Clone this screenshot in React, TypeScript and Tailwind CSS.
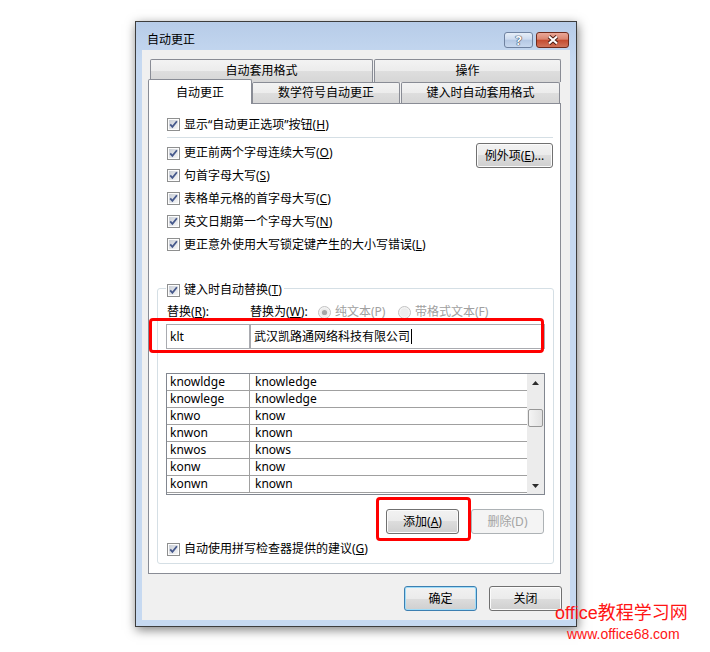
const btn =
  "flex items-center justify-center rounded-[3px] border border-[#707070] bg-[linear-gradient(#f2f2f2_0%,#ebebeb_50%,#dddddd_50%,#cfcfcf_100%)] shadow-[inset_0_0_0_1px_#fbfbfb]";
const tab =
  "flex items-center justify-center rounded-t-[2px] border-x border-t border-[#898c95] bg-[linear-gradient(#f3f3f3_0%,#ececec_50%,#dedede_50%,#d6d6d6_100%)]";

const Check = () => (
  <svg width="13" height="13" viewBox="0 0 13 13" className="shrink-0">
    <defs>
      <linearGradient id="cbfill" x1="0" y1="0" x2="1" y2="1">
        <stop offset="0" stopColor="#c9ced6" />
        <stop offset="1" stopColor="#f7f7f7" />
      </linearGradient>
    </defs>
    <rect x="0.5" y="0.5" width="12" height="12" fill="#fdfdfd" stroke="#8e8f8f" />
    <rect x="2" y="2" width="9" height="9" fill="url(#cbfill)" />
    <path d="M3.2 6.3 L5.4 8.9 L9.9 3.2" fill="none" stroke="#46598c" strokeWidth="1.8" />
  </svg>
);

const Radio = ({ on }: { on?: boolean }) => (
  <svg width="13" height="13" viewBox="0 0 13 13" className="shrink-0">
    <circle cx="6.5" cy="6.5" r="6" fill="#f4f4f4" stroke="#c2c2c2" />
    <circle cx="6.5" cy="6.5" r="4.3" fill="#ececec" />
    {on && <circle cx="6.5" cy="6.5" r="2.6" fill="#a6a6a6" />}
  </svg>
);

const CheckRow = ({ children, h }: { children: React.ReactNode; h: string }) => (
  <div className={`flex items-center gap-[4px] pl-[10px] ${h}`}>
    <Check />
    <span className="leading-none">{children}</span>
  </div>
);

const words: [string, string][] = [
  ["knowldge", "knowledge"],
  ["knowlege", "knowledge"],
  ["knwo", "know"],
  ["knwon", "known"],
  ["knwos", "knows"],
  ["konw", "know"],
  ["konwn", "known"],
];

const Arrow = ({ down }: { down?: boolean }) => (
  <svg width="7" height="4" viewBox="0 0 7 4">
    <path d={down ? "M0 0 L7 0 L3.5 4Z" : "M0 4 L3.5 0 L7 4Z"} fill="#2c2c2c" />
  </svg>
);

export default function App() {
  return (
    <div className="relative h-[652px] w-[710px] overflow-hidden bg-white pl-[135px] pt-[21px] font-['Noto_Sans','Noto_Sans_CJK_SC',sans-serif] text-[12px] text-black">
      <div className="flex h-[606px] w-[442px] flex-col border border-[#3d3d3d] bg-[linear-gradient(#b7cce8,#c6d9f1_40px,#c6d9f1)] px-[6px] pb-[6px] shadow-[1px_3px_10px_rgba(0,0,0,0.5)]">
        {/* title bar */}
        <div className="flex h-[28px] items-start pt-[10px]">
          <div className="flex-1 pl-[5px] leading-[16px]">自动更正</div>
          <div className="flex h-[16px] w-[29px] items-center justify-center rounded-[3px] border border-[#6f82a0] bg-[linear-gradient(#e6eef8,#cddbef_45%,#b4c8e4_50%,#c8d8ee)]">
            <span className="text-[13px] font-bold leading-none text-white [text-shadow:0_0_1px_#2d3a52,0_0_1px_#2d3a52,0_0_1px_#2d3a52]">?</span>
          </div>
          <div className="ml-[3px] mr-[1px] flex h-[16px] w-[33px] items-center justify-center rounded-[3px] border border-[#6e2a1c] bg-[linear-gradient(#eaa898,#da8570_45%,#c44a2e_50%,#d0735a)]">
            <svg width="12" height="10" viewBox="0 0 12 10">
              <path d="M2 1.5 L10 8.5 M10 1.5 L2 8.5" stroke="#4a1a12" strokeWidth="4" />
              <path d="M2 1.5 L10 8.5 M10 1.5 L2 8.5" stroke="#ffffff" strokeWidth="2.2" />
            </svg>
          </div>
        </div>

        {/* client */}
        <div className="flex flex-1 flex-col bg-[#f0f0f0] pt-[9px]">
          {/* tabs row 1 */}
          <div className="ml-[8px] flex h-[23px]">
            <div className={`${tab} w-[223px] pb-[1px]`}>自动套用格式</div>
            <div className={`${tab} ml-[1px] w-[187px] pb-[1px]`}>操作</div>
          </div>
          {/* tabs row 2 */}
          <div className="ml-[6px] flex h-[21px] items-end">
            <div className="relative z-10 -mb-px flex h-[25px] w-[104px] items-center justify-center rounded-t-[2px] border-x border-t border-[#898c95] bg-white pt-[1px]">
              自动更正
            </div>
            <div className={`${tab} h-[21px] w-[148px]`}>数学符号自动更正</div>
            <div className={`${tab} ml-[1px] h-[21px] w-[159px]`}>键入时自动套用格式</div>
          </div>

          {/* panel */}
          <div className="ml-[6px] flex h-[471px] w-[413px] flex-col border border-[#898c95] bg-white px-[8px] pt-[9px]">
            <CheckRow h="h-[23px]">
              显示“自动更正选项”按钮(<u>H</u>)
            </CheckRow>
            <div className="ml-[10px] mt-[1px] h-px w-[386px] bg-[#d5dfe5]" />

            <div className="mt-[4px] flex justify-between">
              <div className="flex flex-col">
                <CheckRow h="h-[22px]">
                  更正前两个字母连续大写(<u>O</u>)
                </CheckRow>
                <CheckRow h="h-[23px]">
                  句首字母大写(<u>S</u>)
                </CheckRow>
                <CheckRow h="h-[23px]">
                  表格单元格的首字母大写(<u>C</u>)
                </CheckRow>
                <CheckRow h="h-[23px]">
                  英文日期第一个字母大写(<u>N</u>)
                </CheckRow>
                <CheckRow h="h-[23px]">
                  更正意外使用大写锁定键产生的大小写错误(<u>L</u>)
                </CheckRow>
              </div>
              <div className={`${btn} -mr-px mt-[1px] h-[25px] w-[77px]`}>
                例外项(<u>E</u>)...
              </div>
            </div>

            {/* group */}
            <div className="mt-[32px] flex w-[397px] flex-col rounded-[3px] border border-[#d5dfe5] pb-[5px]">
              <div className="-mt-[8px] ml-[8px] flex h-[18px] items-center gap-[4px] self-start bg-white pl-[1px] pr-[2px]">
                <Check />
                <span className="leading-none">
                  键入时自动替换(<u>T</u>)
                </span>
              </div>

              <div className="mt-[5px] flex h-[16px] items-center pl-[9px] leading-none">
                <span className="w-[83px]">
                  替换(<u>R</u>):
                </span>
                <span className="w-[68px]">
                  替换为(<u>W</u>):
                </span>
                <Radio on />
                <span className="ml-[4px] w-[63px] text-[#a0a0a0]">纯文本(P)</span>
                <Radio />
                <span className="ml-[4px] text-[#a0a0a0]">带格式文本(F)</span>
              </div>

              <div className="ml-[8px] mt-[4px] flex h-[25px]">
                <div className="flex w-[84px] items-center border border-[#a9abb0] px-[3px]">klt</div>
                <div className="flex w-[295px] items-center border border-[#a9abb0] px-[3px]">
                  武汉凯路通网络科技有限公司
                  <span className="ml-[1px] h-[15px] w-px bg-black" />
                </div>
              </div>

              {/* list */}
              <div className="ml-[8px] mt-[24px] flex h-[122px] w-[379px] border border-[#828790]">
                <div className="flex flex-1 flex-col">
                  {words.map(([a, b]) => (
                    <div key={a} className="flex h-[17px] shrink-0 border-b border-[#a0a0a0]">
                      <div className="flex w-[83px] items-center border-r border-[#a0a0a0] pl-[3px] leading-none">{a}</div>
                      <div className="flex items-center pl-[5px] leading-none">{b}</div>
                    </div>
                  ))}
                </div>
                <div className="flex w-[17px] flex-col items-center bg-[#ececec]">
                  <div className="flex h-[17px] items-center justify-center">
                    <Arrow />
                  </div>
                  <div className="mt-[18px] h-[18px] w-[15px] rounded-[2px] border border-[#979797] bg-[linear-gradient(90deg,#f4f4f4,#e2e2e2)]" />
                  <div className="flex-1" />
                  <div className="flex h-[17px] items-center justify-center">
                    <Arrow down />
                  </div>
                </div>
              </div>

              <div className="mt-[14px] flex justify-end gap-[12px] pr-[9px]">
                <div className={`${btn} h-[25px] w-[73px]`}>
                  添加(<u>A</u>)
                </div>
                <div className="flex h-[25px] w-[73px] items-center justify-center rounded-[3px] border border-[#adb2b5] bg-[#f4f4f4] text-[#a3a3a3]">
                  删除(D)
                </div>
              </div>

              <div className="mt-[6px] flex h-[18px] items-center gap-[4px] pl-[9px]">
                <Check />
                <span className="leading-none">
                  自动使用拼写检查器提供的建议(<u>G</u>)
                </span>
              </div>
            </div>
          </div>

          {/* dialog buttons */}
          <div className="mt-[12px] flex justify-end gap-[12px] pr-[8px]">
            <div className="flex h-[25px] w-[73px] items-center justify-center rounded-[3px] border border-[#3c7fb1] bg-[linear-gradient(#f2f2f2_0%,#ebebeb_50%,#dddddd_50%,#cfcfcf_100%)] shadow-[inset_0_0_0_1px_#9fdcf8]">
              确定
            </div>
            <div className={`${btn} h-[25px] w-[73px]`}>关闭</div>
          </div>
        </div>
      </div>

      {/* red highlight marks */}
      <div className="absolute left-[149px] top-[318px] h-[35px] w-[395px] rounded-[4px] border-[3px] border-[#ff0000]" />
      <div className="absolute left-[376px] top-[497px] h-[44px] w-[95px] rounded-[4px] border-[3px] border-[#ff0000]" />

      {/* watermark */}
      <div className="absolute left-[555px] top-[604px] font-['Liberation_Sans','Noto_Sans_CJK_SC',sans-serif] text-[18px] leading-none text-[#ff1414]">
        office教程学习网
      </div>
      <div className="absolute left-[567px] top-[627px] font-['Liberation_Sans',sans-serif] text-[14px] leading-none text-[#ff1414]">
        www.office68.com
      </div>
    </div>
  );
}
